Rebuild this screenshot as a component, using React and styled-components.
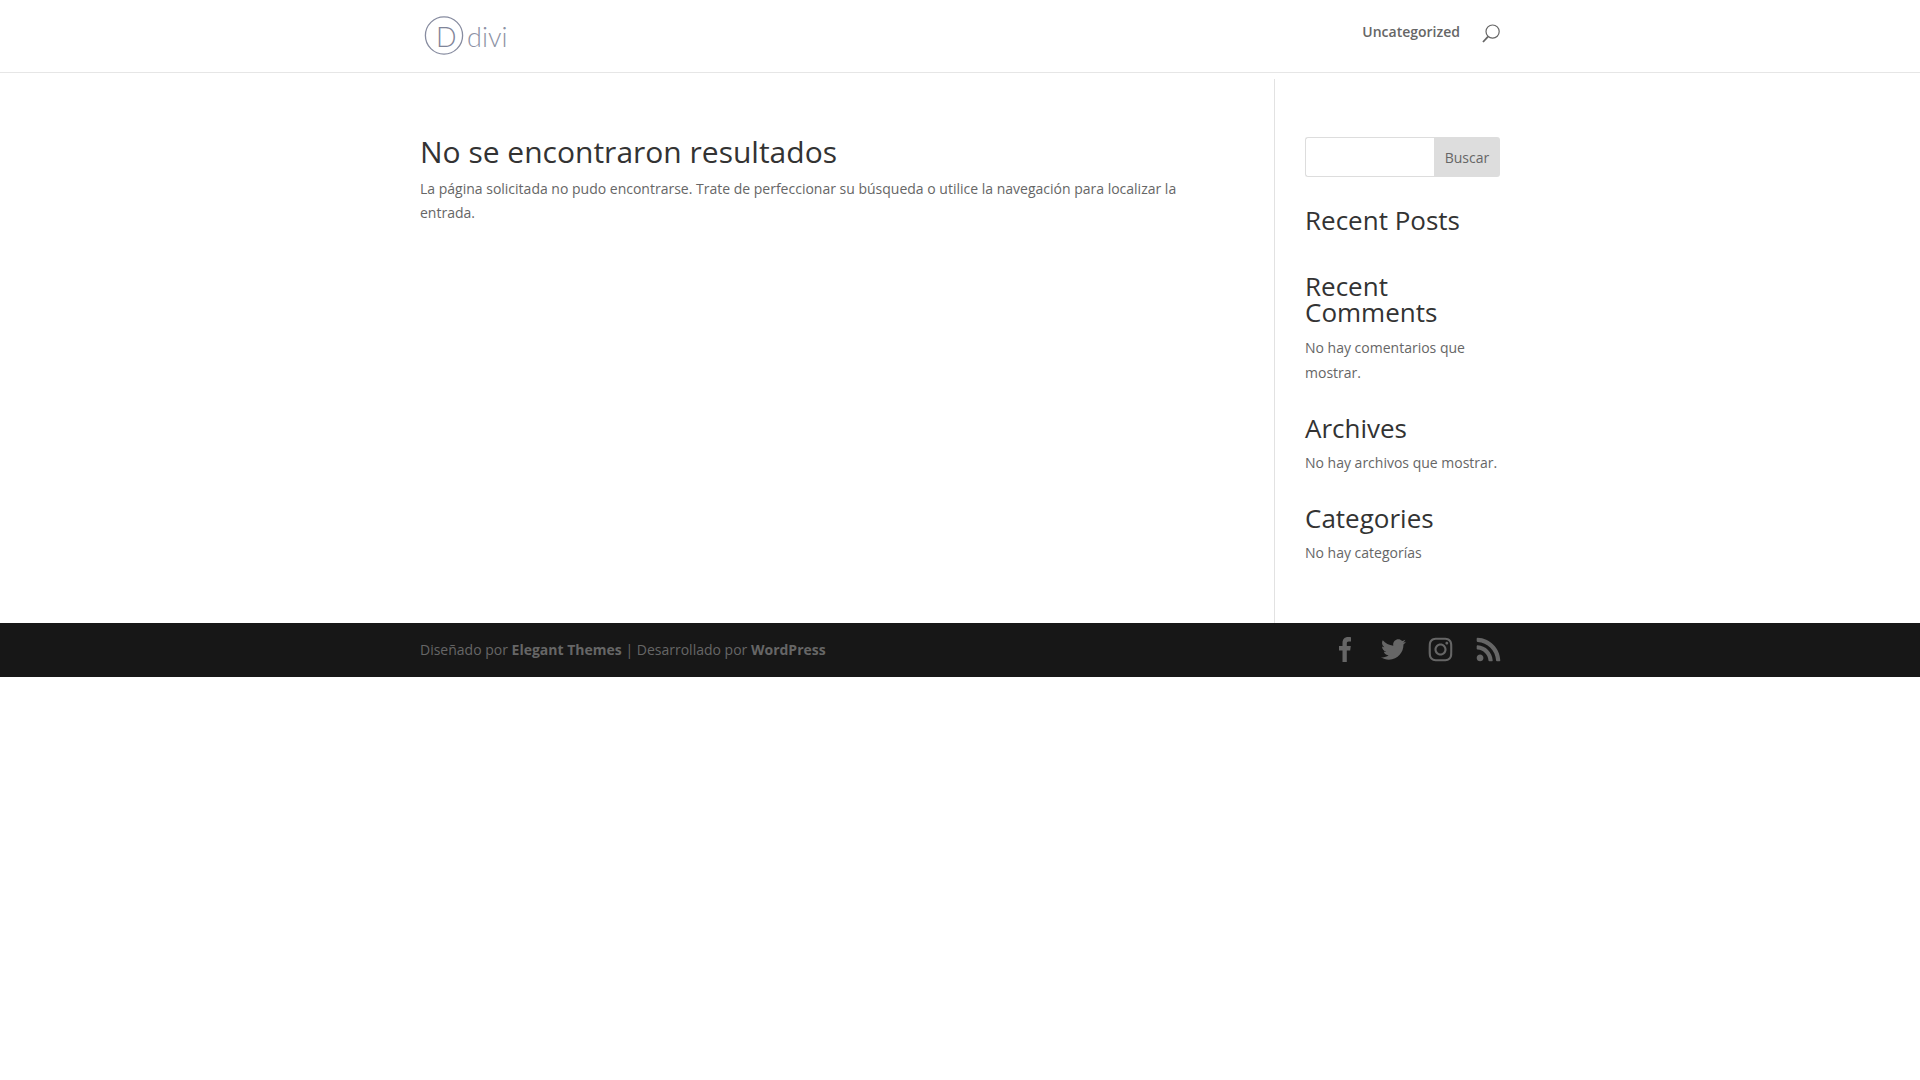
import React from 'react';
import styled, { createGlobalStyle } from 'styled-components';
import { FaTwitter, FaInstagram, FaRss } from 'react-icons/fa';

const GlobalStyle = createGlobalStyle`
	* {
		box-sizing: border-box;
	}
	body {
		margin: 0;
		background: #fff;
		font-family: 'Open Sans', Arial, sans-serif;
		font-size: 14px;
		line-height: 23.8px;
		color: #666;
	}
`;

const Header = styled.header`
	height: 73px;
	background: #fff;
	border-bottom: 1px solid #e6e6e6;
`;

const HeaderInner = styled.div`
	width: 1080px;
	height: 72px;
	margin: 0 auto;
	display: flex;
	align-items: center;
	justify-content: space-between;
`;

const Logo = styled.svg`
	display: block;
	margin-left: 4px;
`;

const Nav = styled.nav`
	display: flex;
	align-items: center;
	gap: 22px;
	margin-top: -8px;
`;

const NavLink = styled.a`
	font-weight: 600;
	font-size: 14px;
	color: #666;
`;

const SearchIcon = styled.svg`
	display: block;
	margin-top: 3px;
`;

const Main = styled.main`
	width: 1080px;
	height: 544px;
	margin: 6px auto 0;
	display: flex;
`;

const Content = styled.div`
	flex: none;
	width: 855px;
	padding-top: 58px;
	border-right: 1px solid #e2e2e2;
`;

const ContentInner = styled.div`
	width: 770px;
`;

const Title = styled.h1`
	margin: 0;
	padding-bottom: 10px;
	font-size: 30px;
	font-weight: 400;
	line-height: 30px;
	color: #333;
`;

const Text = styled.p`
	margin: 0;
	line-height: ${(props) => props.$lineHeight || '23.8px'};
`;

const Sidebar = styled.aside`
	flex: none;
	width: 225px;
	padding: 58px 0 0 30px;
`;

const SearchForm = styled.form`
	display: flex;
	height: 40px;
	margin-bottom: 30px;
`;

const SearchInput = styled.input`
	flex: 1;
	width: 0;
	border: 1px solid #ddd;
	border-right: 0;
	border-radius: 3px 0 0 3px;
	background: #fff;
`;

const SearchButton = styled.button`
	width: 66px;
	padding: 0;
	border: 0;
	border-radius: 0 3px 3px 0;
	background: #ddd;
	color: #666;
	font: 14px 'Open Sans', Arial, sans-serif;
`;

const Widget = styled.section`
	margin-bottom: 30px;
`;

const WidgetTitle = styled.h4`
	margin: 0;
	padding-bottom: 10px;
	font-size: 26px;
	font-weight: 400;
	line-height: 26px;
	color: #333;
`;

const Footer = styled.footer`
	height: 54px;
	background: #171717;
`;

const FooterInner = styled.div`
	width: 1080px;
	height: 100%;
	margin: 0 auto;
	display: flex;
	align-items: center;
	justify-content: space-between;
`;

const Credits = styled.p`
	margin: 0;
	color: #666;

	b {
		font-weight: 700;
	}
`;

const Socials = styled.div`
	display: flex;
	align-items: center;
	gap: 24px;
	margin-top: -2px;
	color: #666;
`;

const SocialLink = styled.a`
	display: flex;
	width: 24px;
	justify-content: center;
	padding-left: ${(props) => (props.$nudge ? '2px' : '0')};
	font-size: ${(props) => props.$size || 24}px;

	svg {
		flex: none;
	}
`;

const App = () => {
	return (
		<>
			<GlobalStyle />
			<Header>
				<HeaderInner>
					<Logo width='84' height='42' viewBox='0 0 84 42'>
						<circle cx='20' cy='20.5' r='18.6' fill='none' stroke='#878ca0' strokeWidth='1.3' />
						<text x='12' y='31.5' fontFamily='Lato' fontWeight='300' fontSize='27' fill='#7f8498'>
							D
						</text>
						<text x='43' y='31.5' fontFamily='Lato' fontWeight='300' fontSize='27' fill='#8d92a5'>
							divi
						</text>
					</Logo>
					<Nav>
						<NavLink>Uncategorized</NavLink>
						<SearchIcon width='18' height='19' viewBox='0 0 18 19'>
							<circle cx='10.6' cy='7.6' r='6.6' fill='none' stroke='#666' strokeWidth='1.2' />
							<path d='M6 12.6 L1 18' stroke='#666' strokeWidth='1.8' />
						</SearchIcon>
					</Nav>
				</HeaderInner>
			</Header>
			<Main>
				<Content>
					<ContentInner>
						<Title>No se encontraron resultados</Title>
						<Text>
							La página solicitada no pudo encontrarse. Trate de perfeccionar su búsqueda o utilice la navegación para localizar la entrada.
						</Text>
					</ContentInner>
				</Content>
				<Sidebar>
					<SearchForm>
						<SearchInput />
						<SearchButton type='button'>Buscar</SearchButton>
					</SearchForm>
					<Widget>
						<WidgetTitle>Recent Posts</WidgetTitle>
					</Widget>
					<Widget>
						<WidgetTitle>Recent Comments</WidgetTitle>
						<Text $lineHeight='25px'>No hay comentarios que mostrar.</Text>
					</Widget>
					<Widget>
						<WidgetTitle>Archives</WidgetTitle>
						<Text>No hay archivos que mostrar.</Text>
					</Widget>
					<Widget>
						<WidgetTitle>Categories</WidgetTitle>
						<Text>No hay categorías</Text>
					</Widget>
				</Sidebar>
			</Main>
			<Footer>
				<FooterInner>
					<Credits>
						Diseñado por <b>Elegant Themes</b> | Desarrollado por <b>WordPress</b>
					</Credits>
					<Socials>
						<SocialLink $nudge>
							<svg width='12' height='25' viewBox='0 0 12 25' fill='currentColor'>
								<path d='M3.5 25V13.5H0V9H3.5V6C3.5 2 5.8 0 9 0C10.3 0 11.4 .1 12 .2V4.4H9.8C8.1 4.4 7.8 5.2 7.8 6.4V9H11.8L11.2 13.5H7.8V25Z' />
							</svg>
						</SocialLink>
						<SocialLink $nudge $size={25}><FaTwitter /></SocialLink>
						<SocialLink $size={27}><FaInstagram /></SocialLink>
						<SocialLink $size={27}><FaRss /></SocialLink>
					</Socials>
				</FooterInner>
			</Footer>
		</>
	);
};

export default App;
